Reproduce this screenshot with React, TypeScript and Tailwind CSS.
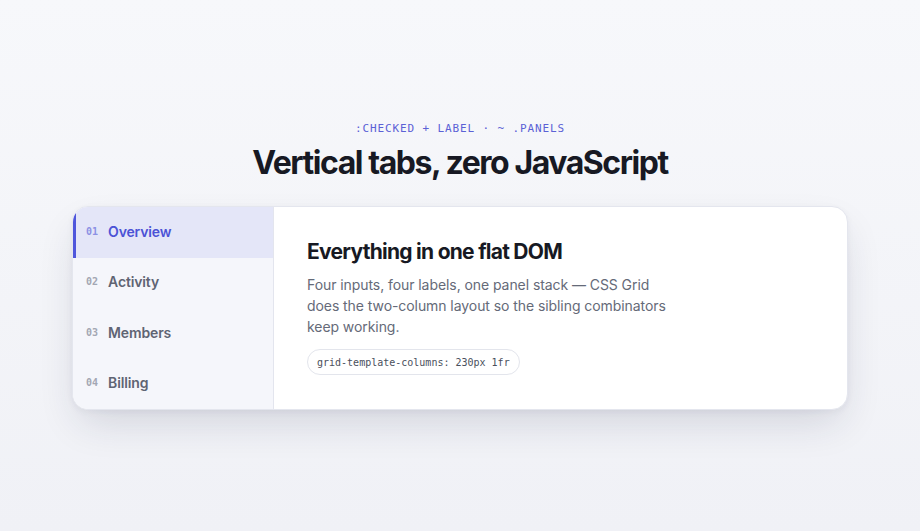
import React from "react";

const tabs = [
  { n: "01", label: "Overview", active: true },
  { n: "02", label: "Activity" },
  { n: "03", label: "Members" },
  { n: "04", label: "Billing" },
];

const mono = { fontFamily: "'DejaVu Sans Mono', 'Liberation Mono', monospace" };

export default function App() {
  return (
    <div
      className="min-h-screen w-full flex flex-col items-center justify-center bg-gradient-to-b from-[#f7f8fb] to-[#f0f1f6]"
      style={{ fontFamily: "Inter, 'Noto Sans', sans-serif" }}
    >
      <div className="text-[11px] leading-4 tracking-[0.08em] text-[#5b61d6] uppercase" style={mono}>
        :checked + label · ~ .panels
      </div>
      <h1 className="mt-[6px] text-[32px] leading-10 font-bold tracking-[-0.045em] text-[#171923]">
        Vertical tabs, zero JavaScript
      </h1>
      <div className="mt-[23px] w-[776px] h-[204px] flex rounded-2xl bg-white border border-[#e4e6ee] overflow-hidden shadow-[0_18px_40px_-8px_rgba(30,35,70,0.16),0_2px_6px_rgba(30,35,70,0.05)]">
        <div className="w-[201px] shrink-0 flex flex-col bg-[#f5f6fb] border-r border-[#e3e5ee]">
          {tabs.map((t) => (
            <div
              key={t.n}
              className={
                "flex-1 flex items-center gap-[10px] pl-[10px] pb-[2px] border-l-[3px] " +
                (t.active ? "bg-[#e4e6f8] border-[#4f56dc]" : "border-transparent")
              }
            >
              <span
                className={"text-[10px] font-bold " + (t.active ? "text-[#8c91e4]" : "text-[#a3a7b3]")}
                style={mono}
              >
                {t.n}
              </span>
              <span
                className={
                  "text-[14px] font-semibold tracking-[-0.01em] " +
                  (t.active ? "text-[#4b52d6]" : "text-[#5f6473]")
                }
              >
                {t.label}
              </span>
            </div>
          ))}
        </div>
        <div className="flex-1 pt-[31px] pl-[33px]">
          <h2 className="text-[21px] leading-7 font-bold tracking-[-0.035em] text-[#171923]">
            Everything in one flat DOM
          </h2>
          <p className="mt-[8px] w-[362px] text-[14px] leading-[21px] tracking-[-0.005em] text-[#656a78]">
            Four inputs, four labels, one panel stack — CSS Grid does the two-column layout so the sibling combinators keep working.
          </p>
          <div
            className="mt-[12px] inline-flex items-center h-[26px] px-[9px] rounded-full border border-[#e3e5ec] bg-white text-[10px] text-[#4a4f5c]"
            style={mono}
          >
            grid-template-columns: 230px 1fr
          </div>
        </div>
      </div>
    </div>
  );
}
